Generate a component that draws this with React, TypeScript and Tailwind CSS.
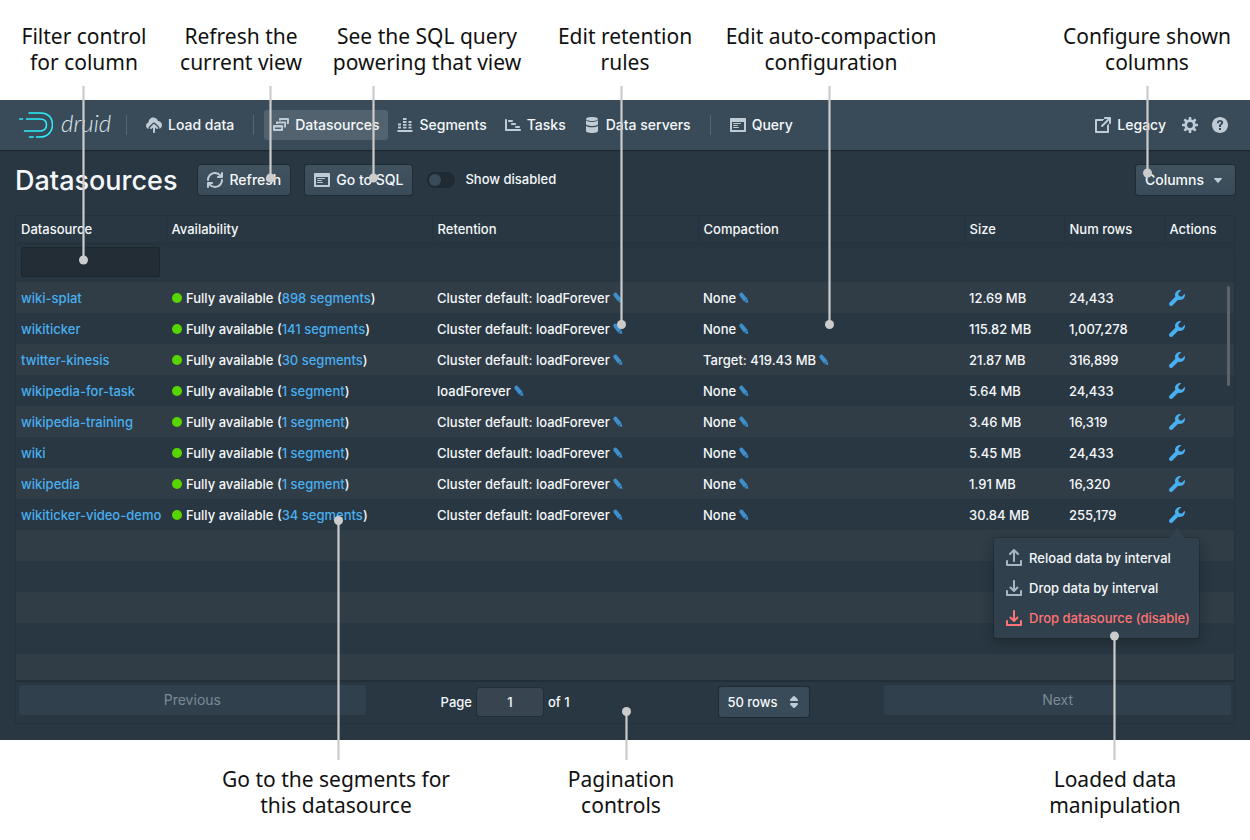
import React from "react";

type IconProps = { className?: string };

function Glyph({ d, className = "" }: { d: string; className?: string }) {
  return (
    <svg viewBox="0 0 16 16" className={`size-4 shrink-0 ${className}`} fill="currentColor" fillRule="evenodd" aria-hidden="true">
      <path d={d} />
    </svg>
  );
}

const PATHS = {
  wrench:
    "M15.83 3.7l-3.06 3.05-2.84-.7-.7-2.83L12.29.17a5.004 5.004 0 00-4.83 1.29 4.967 4.967 0 00-1.12 5.36L.58 12.58c-.36.36-.58.86-.58 1.41 0 1.1.9 2 2 2 .55 0 1.05-.22 1.41-.59l5.77-5.77c1.79.69 3.91.35 5.35-1.12 1.32-1.3 1.74-3.15 1.3-4.81z",
  refresh:
    "M14.99 6.99c-.55 0-1 .45-1 1 0 3.31-2.69 6-6 6-1.77 0-3.36-.78-4.46-2h1.46c.55 0 1-.45 1-1s-.45-1-1-1h-4c-.55 0-1 .45-1 1v4c0 .55.45 1 1 1s1-.45 1-1v-1.74a7.95 7.95 0 006 2.74c4.42 0 8-3.58 8-8 0-.55-.45-1-1-1zm0-7c-.55 0-1 .45-1 1v1.74a7.95 7.95 0 00-6-2.74c-4.42 0-8 3.58-8 8 0 .55.45 1 1 1s1-.45 1-1c0-3.31 2.69-6 6-6 1.77 0 3.36.78 4.46 2h-1.46c-.55 0-1 .45-1 1s.45 1 1 1h4c.55 0 1-.45 1-1v-4c0-.55-.45-1-1-1z",
  application:
    "M3.5 7h7c.28 0 .5-.22.5-.5s-.22-.5-.5-.5h-7c-.28 0-.5.22-.5.5s.22.5.5.5zM15 1H1c-.55 0-1 .45-1 1v12c0 .55.45 1 1 1h14c.55 0 1-.45 1-1V2c0-.55-.45-1-1-1zm-1 12H2V5h12v8zM3.5 9h4c.28 0 .5-.22.5-.5S7.78 8 7.5 8h-4c-.28 0-.5.22-.5.5s.22.5.5.5zm0 2h5c.28 0 .5-.22.5-.5s-.22-.5-.5-.5h-5c-.28 0-.5.22-.5.5s.22.5.5.5z",
  multi:
    "M9 8H1c-.55 0-1 .45-1 1v4c0 .55.45 1 1 1h8c.55 0 1-.45 1-1V9c0-.55-.45-1-1-1zM8 12H2v-1.500h6zM12 4.500H4c-.55 0-1 .45-1 1V7h2v-.5h6.200V9H10.800v1.500H12c.55 0 1-.45 1-1v-4c0-.55-.45-1-1-1zM15 1H7c-.55 0-1 .45-1 1v1.500h2V3h6v2.500h-.2V7H15c.55 0 1-.45 1-1V2c0-.55-.45-1-1-1z",
  bars:
    "M1 6.500h3v2H1zM1 9.500h3v2H1zM6 1h3.500v2H6zM6 4h3.500v2H6zM6 7h3.500v1.700H6zM6 9.700h3.500v1.800H6zM11.500 4h3v2h-3zM11.500 7h3v1.700h-3zM11.500 9.700h3v1.800h-3zM.5 13h15v2H.5z",
  gantt:
    "M15 12H2V3c0-.55-.45-1-1-1s-1 .45-1 1v10c0 .55.45 1 1 1h14c.55 0 1-.45 1-1s-.45-1-1-1zM4 5h3c.55 0 1-.45 1-1s-.45-1-1-1H4c-.55 0-1 .45-1 1s.45 1 1 1zm3 3h3c.55 0 1-.45 1-1s-.45-1-1-1H7c-.55 0-1 .45-1 1s.45 1 1 1zm4 1c-.55 0-1 .45-1 1s.45 1 1 1h3c.55 0 1-.45 1-1s-.45-1-1-1h-3z",
  database:
    "M8 4c3.310 0 6-.9 6-2s-2.690-2-6-2-6 .9-6 2 2.690 2 6 2zM2 3.300V7c0 1.100 2.690 2 6 2s6-.9 6-2V3.300C13 4.400 10.700 5 8 5s-5-.6-6-1.700zM2 8.700V14c0 1.100 2.690 2 6 2s6-.9 6-2V8.700C13 9.800 10.700 10.300 8 10.300S3 9.800 2 8.700z",
  share:
    "M15 0h-5c-.55 0-1 .45-1 1s.45 1 1 1h2.590L6.290 8.290A1.003 1.003 0 007.710 9.710L14 3.410V6c0 .55.45 1 1 1s1-.45 1-1V1c0-.55-.45-1-1-1zM12 8.500V14H2V4h5.500l2-2H1c-.55 0-1 .45-1 1v12c0 .55.45 1 1 1h12c.55 0 1-.45 1-1V6.500l-2 2z",
  help:
    "M8 0C3.580 0 0 3.580 0 8s3.580 8 8 8 8-3.580 8-8-3.580-8-8-8zM7 11h2v2H7zM4.900 6.200C5 4.100 6.300 3 8.100 3c1.800 0 3.100 1 3.100 2.600 0 1.100-.6 1.700-1.300 2.200-.7.500-.9.800-.9 1.400V10H7v-.9c0-1.100.5-1.800 1.300-2.300.6-.4.800-.6.800-1.100 0-.6-.4-.9-1-.9-.8 0-1.200.5-1.200 1.400z",
  reload:
    "M15 10c-.55 0-1 .45-1 1v3H2v-3c0-.55-.45-1-1-1s-1 .45-1 1v4c0 .55.45 1 1 1h14c.55 0 1-.45 1-1v-4c0-.55-.45-1-1-1zM4 5c.28 0 .53-.11.710-.29L7 2.410V11c0 .55.45 1 1 1s1-.45 1-1V2.410l2.290 2.290a1.003 1.003 0 001.420-1.420l-4-4a1 1 0 00-1.420 0l-4 4C3.110 3.470 3 3.720 3 4c0 .55.45 1 1 1z",
  drop:
    "M15 10c-.55 0-1 .45-1 1v3H2v-3c0-.55-.45-1-1-1s-1 .45-1 1v4c0 .55.45 1 1 1h14c.55 0 1-.45 1-1v-4c0-.55-.45-1-1-1zM7.290 11.710a1 1 0 001.420 0l3.500-3.500a1.003 1.003 0 00-1.420-1.420L9 8.590V1c0-.55-.45-1-1-1S7 .45 7 1v7.590L5.210 6.790a1.003 1.003 0 00-1.420 1.420z",
  caret: "M12 6.500c0-.28-.22-.5-.5-.5h-7a.495.495 0 00-.37.83l3.500 4c.090.100.220.170.370.170s.280-.070.370-.170l3.500-4c.080-.090.130-.200.130-.330z",
  doubleCaret: "M5 7h6a1 1 0 00.700-1.700l-3-3a1 1 0 00-1.400 0l-3 3A1 1 0 005 7zM11 9H5a1 1 0 00-.7 1.700l3 3a1 1 0 001.400 0l3-3A1 1 0 0011 9z",
};

function CloudUpload({ className = "" }: IconProps) {
  return (
    <svg viewBox="0 0 16 16" className={`size-4 shrink-0 ${className}`} fill="currentColor" aria-hidden="true">
      <path d="M2.600 12C1 11.500 0 10.300 0 8.700c0-1.600 1-2.900 2.500-3.300C2.600 2.700 4.700.6 7.300.6c2.200 0 4 1.300 4.600 3.300C14.200 3.900 16 5.700 16 8c0 1.900-1.100 3.400-2.700 3.900.3-1-.1-1.900-.8-2.600L9.500 6.200a2.100 2.100 0 00-3 0L3.400 9.300c-.7.7-1.100 1.700-.8 2.700z" />
      <path d="M8.710 7.290a1 1 0 00-1.420 0l-3 3a1.003 1.003 0 001.420 1.420L7 10.410V15c0 .55.45 1 1 1s1-.45 1-1v-4.590l1.290 1.290a1.003 1.003 0 001.420-1.420z" />
    </svg>
  );
}

function Cog({ className = "" }: IconProps) {
  return (
    <svg viewBox="0 0 16 16" className={`size-4 shrink-0 ${className}`} aria-hidden="true">
      <circle cx="8" cy="8" r="4.300" fill="none" stroke="currentColor" strokeWidth="2.800" />
      <g fill="currentColor">
        {[0, 45, 90, 135, 180, 225, 270, 315].map((a) => (
          <rect key={a} x="6.700" y="0" width="2.600" height="3.500" rx="0.600" transform={`rotate(${a} 8 8)`} />
        ))}
      </g>
    </svg>
  );
}

function Pencil() {
  return (
    <svg viewBox="0 0 10 12" className="h-3 w-2.5" fill="#3d8fcb" aria-hidden="true">
      <path d="M.4 2.600C0 1.400 2.200-.1 3.400.8L8.600 7 5 9.600.4 3.400z" />
      <path d="M5.300 9.900L8.800 7.300l.5 3.800z" />
    </svg>
  );
}

function Logo() {
  return (
    <a href="#home" className="mr-[13px] flex w-[98px] items-center gap-2 pl-1" aria-label="druid home">
      <svg viewBox="0 0 34 26" className="h-[26px] w-[34px] shrink-0" fill="none" stroke="#2ceefb" strokeWidth="1.600" strokeLinecap="round" aria-hidden="true">
        <path d="M10 1h11.500c7.400 0 12 4.500 12 11.500 0 7.500-5 12.500-13 12.500h-3" />
        <path d="M7.500 7H21c4 0 6.500 2 6.500 5.700C27.500 16.700 24.500 19 20 19H5.500" />
        <path d="M.8 7h2.700M10.500 25h3.700" />
      </svg>
      <span className="pb-1 font-['Lato'] text-2xl leading-6 font-light text-[#dfe6eb] italic">druid</span>
    </a>
  );
}

function NavItem({ icon, label, active = false }: { icon: React.ReactNode; label: string; active?: boolean }) {
  return (
    <a
      href={`#${label.toLowerCase().replace(" ", "-")}`}
      className={`flex h-[30px] items-center gap-1.5 rounded-[3px] px-[9px] text-sm whitespace-nowrap ${active ? "bg-[#52636f]" : ""}`}
    >
      <span className="text-[#bfccd6]">{icon}</span>
      {label}
    </a>
  );
}

function NavDivider() {
  return <span className="mx-2.5 h-5 w-px bg-[#56656f]" />;
}

const BUTTON =
  "flex h-[30px] items-center gap-1.5 rounded-[3px] bg-linear-to-b from-[#41525f] to-[#394b59] px-[9px] text-sm whitespace-nowrap shadow-[0_0_0_1px_rgba(16,22,26,0.35)]";

type Row = { name: string; segments: string; retention: string; compaction: string; size: string; rows: string };

const FOREVER = "Cluster default: loadForever";

const ROWS: Row[] = [
  { name: "wiki-splat", segments: "898 segments", retention: FOREVER, compaction: "None", size: "12.69 MB", rows: "24,433" },
  { name: "wikiticker", segments: "141 segments", retention: FOREVER, compaction: "None", size: "115.82 MB", rows: "1,007,278" },
  { name: "twitter-kinesis", segments: "30 segments", retention: FOREVER, compaction: "Target: 419.43 MB", size: "21.87 MB", rows: "316,899" },
  { name: "wikipedia-for-task", segments: "1 segment", retention: "loadForever", compaction: "None", size: "5.64 MB", rows: "24,433" },
  { name: "wikipedia-training", segments: "1 segment", retention: FOREVER, compaction: "None", size: "3.46 MB", rows: "16,319" },
  { name: "wiki", segments: "1 segment", retention: FOREVER, compaction: "None", size: "5.45 MB", rows: "24,433" },
  { name: "wikipedia", segments: "1 segment", retention: FOREVER, compaction: "None", size: "1.91 MB", rows: "16,320" },
  { name: "wikiticker-video-demo", segments: "34 segments", retention: FOREVER, compaction: "None", size: "30.84 MB", rows: "255,179" },
];

const EMPTY_ROWS = [0, 1, 2, 3, 4];

function Editable({ text, label }: { text: string; label: string }) {
  return (
    <span className="flex items-center gap-[3px]">
      {text}
      <button type="button" aria-label={label}>
        <Pencil />
      </button>
    </span>
  );
}

function ActionMenu() {
  return (
    <div className="absolute top-[31px] -right-3.5 z-10 w-[205px] rounded-[3px] bg-[#30404d] py-[5px] shadow-[0_0_0_1px_rgba(16,22,26,0.2),0_4px_12px_rgba(16,22,26,0.4)]">
      <svg viewBox="0 0 24 11" className="absolute -top-2.5 right-2.5 h-[11px] w-6" aria-hidden="true">
        <path d="M0 11c3 0 4-1 6-3l4.500-6.500c1-1.200 2-1.200 3 0L18 8c2 2 3 3 6 3z" fill="#30404d" />
      </svg>
      <button type="button" className="flex h-[30px] w-full items-center gap-[7px] px-3 whitespace-nowrap">
        <Glyph d={PATHS.reload} className="overflow-visible text-[#a7b6c2]" />
        Reload data by interval
      </button>
      <button type="button" className="flex h-[30px] w-full items-center gap-[7px] px-3 whitespace-nowrap">
        <Glyph d={PATHS.drop} className="text-[#a7b6c2]" />
        Drop data by interval
      </button>
      <button type="button" className="flex h-[30px] w-full items-center gap-[7px] px-3 whitespace-nowrap text-[#ff7373]">
        <Glyph d={PATHS.drop} />
        Drop datasource (disable)
      </button>
    </div>
  );
}

const HEADERS = ["Datasource", "Availability", "Retention", "Compaction", "Size", "Num rows", "Actions"];

function DatasourceTable() {
  return (
    <div className="relative max-h-[464px] overflow-hidden">
      <table className="w-full table-fixed border-collapse text-left text-[13px] leading-5">
        <colgroup>
          <col className="w-[150px]" />
          <col />
          <col />
          <col />
          <col className="w-[100px]" />
          <col className="w-[100px]" />
          <col className="w-[70px]" />
        </colgroup>
        <thead>
          <tr className="h-[26px] shadow-[0_2px_6px_rgba(16,22,26,0.15)]">
            {HEADERS.map((h) => (
              <th key={h} scope="col" className="border-l border-[#25323c] pr-1 pl-[5px] font-medium first:border-l-0">
                {h}
              </th>
            ))}
          </tr>
          <tr className="h-10">
            <td className="pr-1.5 pl-[5px]">
              <input
                type="text"
                aria-label="Filter by datasource"
                className="block h-[30px] w-full rounded-[3px] bg-[#222d36] px-2 shadow-[inset_0_0_0_1px_rgba(16,22,26,0.3)] outline-none"
              />
            </td>
            {HEADERS.slice(1).map((h) => (
              <td key={h} />
            ))}
          </tr>
        </thead>
        <tbody>
          {ROWS.map((r, i) => (
            <tr key={r.name} className="h-[31px] odd:bg-[#303c46]">
              <td className="px-[5px] whitespace-nowrap">
                <a href={`#${r.name}`} className="text-[#48aff0]">{r.name}</a>
              </td>
              <td className="px-[5px] whitespace-nowrap">
                <span className="flex items-center gap-1">
                  <span className="ml-px size-2.5 rounded-full bg-[#57d500]" />
                  <span>
                    Fully available (<a href={`#segments-${r.name}`} className="text-[#48aff0]">{r.segments}</a>)
                  </span>
                </span>
              </td>
              <td className="px-[5px] whitespace-nowrap">
                <Editable text={r.retention} label={`Edit retention of ${r.name}`} />
              </td>
              <td className="px-[5px] whitespace-nowrap">
                <Editable text={r.compaction} label={`Edit compaction of ${r.name}`} />
              </td>
              <td className="px-[5px] whitespace-nowrap">{r.size}</td>
              <td className="px-[5px] whitespace-nowrap">{r.rows}</td>
              <td className="px-[5px]">
                <div className="relative flex w-4">
                  <button type="button" aria-label={`Actions for ${r.name}`} className="text-[#48aff0]">
                    <Glyph d={PATHS.wrench} />
                  </button>
                  {i === ROWS.length - 1 && <ActionMenu />}
                </div>
              </td>
            </tr>
          ))}
          {EMPTY_ROWS.map((n) => (
            <tr key={n} className="h-[31px] odd:bg-[#303c46]">
              <td colSpan={7} />
            </tr>
          ))}
        </tbody>
      </table>
      <div className="absolute top-[70px] right-1 h-[100px] w-[3px] rounded-full bg-[#5d6469]" />
    </div>
  );
}

function Pagination() {
  return (
    <div className="grid grid-cols-[347fr_519fr_347fr] border-t-2 border-[#232f38] px-[3px] pt-[3px] pb-1.5 text-sm">
      <button type="button" disabled className="h-[30px] rounded-[3px] bg-[#30404d] font-normal text-[#7b8a95]">
        Previous
      </button>
      <div className="flex items-center justify-around pt-0.5 text-[13px]">
        <label className="flex items-center gap-[5px]">
          Page
          <input
            type="text"
            defaultValue="1"
            className="h-7 w-[66px] rounded-[3px] bg-[#384450] text-center shadow-[0_0_0_1px_rgba(16,22,26,0.25)] outline-none"
          />
          of 1
        </label>
        <span className="relative flex items-center">
          <select
            aria-label="Rows per page"
            className="h-[30px] w-[90px] appearance-none rounded-[3px] bg-[#394b59] pl-2 shadow-[0_0_0_1px_rgba(16,22,26,0.4)] outline-none"
          >
            <option>50 rows</option>
          </select>
          <Glyph d={PATHS.doubleCaret} className="pointer-events-none absolute right-[7px] text-[#bfccd6]" />
        </span>
      </div>
      <button type="button" disabled className="h-[30px] rounded-[3px] bg-[#30404d] font-normal text-[#7b8a95]">
        Next
      </button>
    </div>
  );
}

type Label = { lines: [string, string]; place: string };

const LABELS: Label[] = [
  { lines: ["Filter control", "for column"], place: "left-[84px] top-[23px]" },
  { lines: ["Refresh the", "current view"], place: "left-[241px] top-[23px]" },
  { lines: ["See the SQL query", "powering that view"], place: "left-[427px] top-[23px]" },
  { lines: ["Edit retention", "rules"], place: "left-[625px] top-[23px]" },
  { lines: ["Edit auto-compaction", "configuration"], place: "left-[831px] top-[23px]" },
  { lines: ["Configure shown", "columns"], place: "left-[1147px] top-[23px]" },
  { lines: ["Go to the segments for", "this datasource"], place: "left-[336px] bottom-[22px]" },
  { lines: ["Pagination", "controls"], place: "left-[621px] bottom-[22px]" },
  { lines: ["Loaded data", "manipulation"], place: "left-[1115px] bottom-[22px]" },
];

const LEADERS = [
  { x: 83.5, from: 86, dot: 260 },
  { x: 270.5, from: 86, dot: 178 },
  { x: 373.5, from: 86, dot: 178 },
  { x: 621.5, from: 86, dot: 324.5 },
  { x: 829.5, from: 86, dot: 324.5 },
  { x: 1147.5, from: 86, dot: 173 },
  { x: 338.5, from: 760, dot: 520.5 },
  { x: 626.5, from: 760, dot: 711.5 },
  { x: 1114.5, from: 760, dot: 636 },
];

function Callouts() {
  return (
    <div className="pointer-events-none absolute inset-0 z-20 font-['Noto_Sans','Open_Sans',sans-serif] text-[21px] leading-[26px] font-normal text-[#111111]">
      <svg width="1250" height="840" viewBox="0 0 1250 840" className="absolute top-0 left-0" aria-hidden="true">
        {LEADERS.map((l) => (
          <g key={l.x}>
            <line x1={l.x} x2={l.x} y1={l.from} y2={l.dot} stroke="#cccccc" strokeWidth="2.200" />
            <circle cx={l.x} cy={l.dot} r="4.500" fill="#cccccc" />
          </g>
        ))}
      </svg>
      {LABELS.map((l) => (
        <p key={l.lines[0]} className={`absolute -translate-x-1/2 text-center whitespace-nowrap ${l.place}`}>
          {l.lines[0]}
          <br />
          {l.lines[1]}
        </p>
      ))}
    </div>
  );
}

export default function App() {
  return (
    <div className="relative bg-white py-[100px] font-['Inter',sans-serif] font-medium text-[#f5f8fa]">
      <div className="bg-[#293742] pb-4">
        <nav className="flex h-[50px] items-center bg-[#394b59] px-[15px] shadow-[0_1px_1px_rgba(16,22,26,0.5)]">
          <Logo />
          <span className="mr-2.5 h-5 w-px bg-[#56656f]" />
          <NavItem icon={<CloudUpload />} label="Load data" />
          <NavDivider />
          <NavItem icon={<Glyph d={PATHS.multi} />} label="Datasources" active />
          <NavItem icon={<Glyph d={PATHS.bars} />} label="Segments" />
          <NavItem icon={<Glyph d={PATHS.gantt} />} label="Tasks" />
          <NavItem icon={<Glyph d={PATHS.database} />} label="Data servers" />
          <NavDivider />
          <NavItem icon={<Glyph d={PATHS.application} />} label="Query" />
          <div className="ml-auto flex">
            <NavItem icon={<Glyph d={PATHS.share} />} label="Legacy" />
            <button type="button" aria-label="Settings" className="flex size-[30px] items-center justify-center text-[#bfccd6]">
              <Cog />
            </button>
            <button type="button" aria-label="Help" className="flex size-[30px] items-center justify-center text-[#bfccd6]">
              <Glyph d={PATHS.help} />
            </button>
          </div>
        </nav>
        <main className="px-[15px]">
          <header className="flex items-center gap-[15px] py-[15px]">
            <h1 className="mr-1.5 pt-0.5 text-[27px] leading-7">Datasources</h1>
            <button type="button" className={BUTTON}>
              <Glyph d={PATHS.refresh} className="text-[#bfccd6]" />
              Refresh
            </button>
            <button type="button" className={BUTTON}>
              <Glyph d={PATHS.application} className="text-[#bfccd6]" />
              Go to SQL
            </button>
            <label className="flex items-center gap-2.5 text-[13px]">
              <input
                type="checkbox"
                role="switch"
                className="h-4 w-7 appearance-none rounded-full bg-[#1f2a32] before:m-0.5 before:block before:size-3 before:rounded-full before:bg-[#394b59]"
              />
              Show disabled
            </label>
            <button type="button" className={`${BUTTON} ml-auto`}>
              Columns
              <Glyph d={PATHS.caret} className="text-[#bfccd6]" />
            </button>
          </header>
          <section className="mt-[5px] border border-[#25323c]">
            <DatasourceTable />
            <Pagination />
          </section>
        </main>
      </div>
      <Callouts />
    </div>
  );
}
